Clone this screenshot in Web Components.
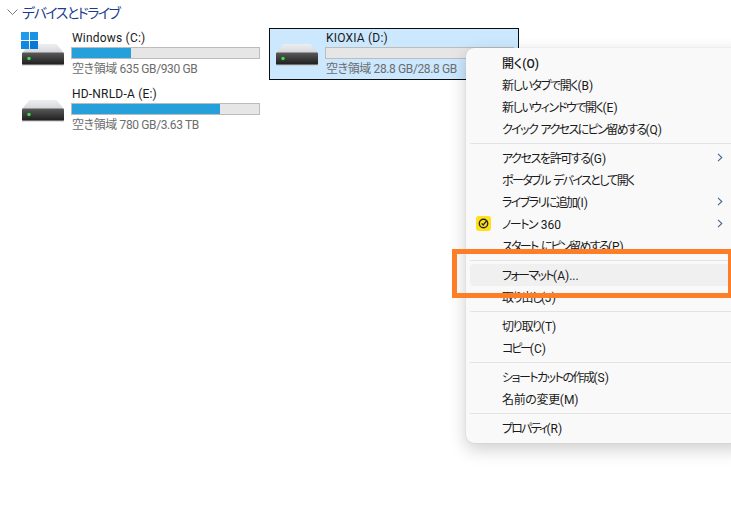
<!DOCTYPE html>
<html lang="ja">
<head>
<meta charset="utf-8">
<title>デバイスとドライブ</title>
<style>
  html, body { margin: 0; height: 100%; background: #fff; overflow: hidden; }
  body { font: 12px Roboto, "Noto Sans CJK JP", sans-serif; font-feature-settings: "palt"; }
</style>
</head>
<body>
<template id="drive-svg">
  <svg width="42" height="22" viewBox="0 0 42 22">
    <defs>
      <linearGradient id="top" x1="0" y1="0" x2="0" y2="1"><stop offset="0" stop-color="#eceef0"/><stop offset="1" stop-color="#d4d6da"/></linearGradient>
      <linearGradient id="body" x1="0" y1="0" x2="0" y2="1"><stop offset="0" stop-color="#5a5a5a"/><stop offset="1" stop-color="#1c1c1c"/></linearGradient>
    </defs>
    <path d="M7.5 0H34.5L42 9H0Z" fill="url(#top)"/>
    <rect x="0" y="8.5" width="42" height="12.5" rx="1" fill="url(#body)"/>
    <rect x="0" y="20.5" width="42" height="1" fill="#bdbdbd"/>
    <circle cx="7" cy="14.5" r="1.7" fill="#3be04a"/>
  </svg>
</template>

<script>
// ドライブの 1 タイル
class DriveTile extends HTMLElement {
  constructor() {
    super();
    this.attachShadow({ mode: 'open' });
    this.shadowRoot.innerHTML = `
      <style>
        :host { display: flex; box-sizing: border-box; width: 250px; height: 52px; padding: 1px 0 0 7px; border: 1px solid transparent; color: #1a1a1a; }
        :host([selected]) { background: #cce8ff; border-color: #0d0d0d; }
        .icon { position: relative; width: 42px; margin: 14px 7px 0 -1px; flex: none; }
        .text { width: 189px; margin-top: -1px; }
        .name { height: 18px; line-height: 18px; padding-left: 1px; letter-spacing: .2px; }
        .bar { box-sizing: border-box; height: 12px; background: #e6e6e6; border: 1px solid #bcbcbc; }
        .fill { height: 100%; background: #26a0da; }
        .free { height: 18px; line-height: 18px; margin-top: 1px; padding-left: 1px; color: #6d6d6d; letter-spacing: -.38px; }
      </style>
      <div class="icon"><slot name="logo"></slot></div>
      <div class="text">
        <div class="name"><slot name="name"></slot></div>
        <div class="bar"><div class="fill"></div></div>
        <div class="free"><slot name="free"></slot></div>
      </div>`;
    this.shadowRoot.querySelector('.icon').prepend(
      document.getElementById('drive-svg').content.cloneNode(true));
  }

  connectedCallback() {
    this.shadowRoot.querySelector('.fill').style.width = (this.getAttribute('used') || 0) + 'px';
  }
}
customElements.define('drive-tile', DriveTile);

// セクション見出し
class SectionHead extends HTMLElement {
  constructor() {
    super();
    this.attachShadow({ mode: 'open' });
    this.shadowRoot.innerHTML = `
      <style>
        :host { display: flex; align-items: center; gap: 4px; height: 24px; padding-left: 7px; color: #1c3d8f; font-size: 14px; letter-spacing: -1.5px; }
        svg { flex: none; }
      </style>
      <svg width="11" height="6" viewBox="0 0 11 6"><path d="M.5.5 5.5 5.5 10.5.5" fill="none" stroke="#7a7a7a"/></svg>
      <slot></slot>`;
  }
}
customElements.define('section-head', SectionHead);

// コンテキスト メニュー
class CtxMenu extends HTMLElement {
  constructor() {
    super();
    this.attachShadow({ mode: 'open' });
    this.shadowRoot.innerHTML = `
      <style>
        :host { position: absolute; left: 466px; top: 48px; width: 284px; box-sizing: border-box; padding: 4px; background: #f9f9f9; border-radius: 8px; box-shadow: 0 6px 18px rgba(0,0,0,.2), 0 0 1px rgba(0,0,0,.25); }
      </style>
      <slot></slot>`;
  }
}
customElements.define('ctx-menu', CtxMenu);

class MenuItem extends HTMLElement {
  constructor() {
    super();
    this.attachShadow({ mode: 'open' });
    this.shadowRoot.innerHTML = `
      <style>
        :host { display: flex; align-items: center; height: 22px; width: 261px; padding: 0 0 2px 32px; box-sizing: border-box; position: relative; color: #1a1a1a; border-radius: 4px; white-space: pre; word-spacing: 2px; }
        :host([hover]) { background: #f0f0f0; width: 276px; }
        :host([bold]) { font-weight: 500; }
        .ic { position: absolute; left: 6px; top: 3px; width: 15px; height: 15px; }
        .arrow { position: absolute; left: 247px; top: 6px; display: none; }
        :host([sub]) .arrow { display: block; }
      </style>
      <div class="ic"><slot name="icon"></slot></div>
      <div><slot></slot></div>
      <svg class="arrow" width="6" height="9" viewBox="0 0 6 9"><path d="M1 .8 4.8 4.5 1 8.2" fill="none" stroke="#44688f" stroke-width="1.1"/></svg>`;
  }
}
customElements.define('menu-item', MenuItem);

// アクセス キー部分は字詰めしない
class AccKey extends HTMLElement {
  constructor() {
    super();
    this.attachShadow({ mode: 'open' });
    this.shadowRoot.innerHTML = `<style>:host { letter-spacing: 0; word-spacing: 0; }</style><slot></slot>`;
  }
}
customElements.define('acc-key', AccKey);

class MenuSep extends HTMLElement {
  constructor() {
    super();
    this.attachShadow({ mode: 'open' });
    this.shadowRoot.innerHTML = `<style>:host { display: block; height: 1px; margin: 3px 0; background: #e3e3e3; }</style>`;
  }
}
customElements.define('menu-sep', MenuSep);

// 強調の枠
class MarkBox extends HTMLElement {
  constructor() {
    super();
    this.attachShadow({ mode: 'open' });
    this.shadowRoot.innerHTML = `<style>:host { position: absolute; left: 452px; top: 249px; width: 286px; height: 49px; box-sizing: border-box; border: 5px solid #fd7e27; border-right-width: 10px; pointer-events: none; }</style>`;
  }
}
customElements.define('mark-box', MarkBox);

class DriveGrid extends HTMLElement {
  constructor() {
    super();
    this.attachShadow({ mode: 'open' });
    this.shadowRoot.innerHTML = `<style>:host { display: grid; grid-template-columns: 250px 250px; gap: 4px; padding: 4px 0 0 15px; }</style><slot></slot>`;
  }
}
customElements.define('drive-grid', DriveGrid);
</script>

<section-head>デバイスとドライブ</section-head>
<drive-grid>
  <drive-tile used="59">
    <svg slot="logo" style="position:absolute;left:-1px;top:-12px" width="17" height="17" viewBox="0 0 17 17">
      <rect width="8" height="8" fill="#1e9cea"/><rect x="9" width="8" height="8" fill="#1a93e6"/>
      <rect y="9" width="8" height="8" fill="#1187e0"/><rect x="9" y="9" width="8" height="8" fill="#0a78d8"/>
    </svg>
    <span slot="name">Windows (C:)</span>
    <span slot="free">空き領域 635 GB/930 GB</span>
  </drive-tile>
  <drive-tile selected used="0">
    <span slot="name">KIOXIA (D:)</span>
    <span slot="free">空き領域 28.8 GB/28.8 GB</span>
  </drive-tile>
  <drive-tile used="148">
    <span slot="name">HD-NRLD-A (E:)</span>
    <span slot="free">空き領域 780 GB/3.63 TB</span>
  </drive-tile>
</drive-grid>

<ctx-menu>
  <menu-item bold>開く<acc-key>(O)</acc-key></menu-item>
  <menu-item style="letter-spacing:-1.3px">新しいタブで開く<acc-key>(B)</acc-key></menu-item>
  <menu-item style="letter-spacing:-1.4px">新しいウィンドウで開く<acc-key>(E)</acc-key></menu-item>
  <menu-item style="letter-spacing:-1.6px">クイック アクセスにピン留めする<acc-key>(Q)</acc-key></menu-item>
  <menu-sep></menu-sep>
  <menu-item sub style="letter-spacing:-1.4px">アクセスを許可する<acc-key>(G)</acc-key></menu-item>
  <menu-item style="letter-spacing:-1.6px">ポータブル デバイスとして開く</menu-item>
  <menu-item sub style="letter-spacing:-1.6px">ライブラリに追加<acc-key>(I)</acc-key></menu-item>
  <menu-item sub style="letter-spacing:-1.5px"><svg slot="icon" width="15" height="15" viewBox="0 0 15 15">
      <rect width="15" height="15" rx="3" fill="#ffe11a"/>
      <circle cx="7.5" cy="7.5" r="4.2" fill="none" stroke="#262626" stroke-width="1.4"/>
      <path d="M5.6 7.4 7.2 9 10.8 4.6" fill="none" stroke="#262626" stroke-width="1.3"/>
    </svg>ノートン <acc-key>360</acc-key></menu-item>
  <menu-item style="letter-spacing:-1.7px">スタート にピン留めする<acc-key>(P)</acc-key></menu-item>
  <menu-sep></menu-sep>
  <menu-item hover style="letter-spacing:-1.6px">フォーマット<acc-key>(A)...</acc-key></menu-item>
  <menu-item style="letter-spacing:-1.3px">取り出し<acc-key>(J)</acc-key></menu-item>
  <menu-sep></menu-sep>
  <menu-item style="letter-spacing:-1.3px">切り取り<acc-key>(T)</acc-key></menu-item>
  <menu-item style="letter-spacing:-2.2px">コピー<acc-key>(C)</acc-key></menu-item>
  <menu-sep></menu-sep>
  <menu-item style="letter-spacing:-1.5px">ショートカットの作成<acc-key>(S)</acc-key></menu-item>
  <menu-item style="letter-spacing:-.36px">名前の変更<acc-key>(M)</acc-key></menu-item>
  <menu-sep></menu-sep>
  <menu-item style="letter-spacing:-1.8px">プロパティ<acc-key>(R)</acc-key></menu-item>
</ctx-menu>
<mark-box></mark-box>
</body>
</html>
